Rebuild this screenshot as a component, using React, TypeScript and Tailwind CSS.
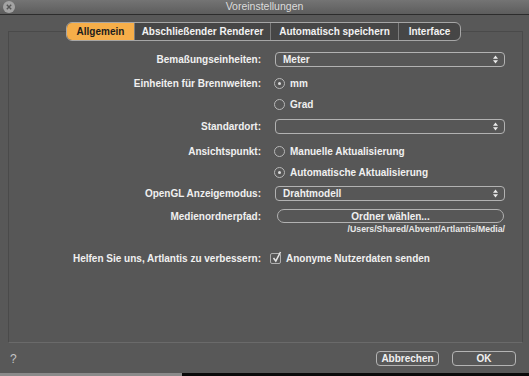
import React from 'react';

function Arrows() {
  return (
    <svg width="5" height="9" viewBox="0 0 5 9">
      <path d="M2.5 0.5 L5 3.8 L0 3.8 Z" fill="#ececec" />
      <path d="M0 5.2 L5 5.2 L2.5 8.5 Z" fill="#ececec" />
    </svg>
  );
}

function SelectBox({ value }: { value?: string }) {
  return (
    <div className="flex h-[15px] w-[230px] items-center justify-between rounded-[4px] border border-[#b2b2b2] pl-[7px] pr-[6px]">
      <span>{value}</span>
      <Arrows />
    </div>
  );
}

function Radio({ label, checked }: { label: string; checked?: boolean }) {
  return (
    <div className="-ml-[1px] flex items-center gap-[5px]">
      <span className="flex h-[11px] w-[11px] items-center justify-center rounded-full border border-[#b8b8b8]">
        {checked ? <span className="h-[3px] w-[3px] rounded-full bg-[#dddddd]" /> : null}
      </span>
      <span>{label}</span>
    </div>
  );
}

function Row({ label, className, children }: { label?: string; className: string; children: React.ReactNode }) {
  return (
    <div className={`flex items-center ${className}`}>
      <div className="w-[252px] text-right">{label}</div>
      <div className="ml-[14px] flex w-[230px] items-center">{children}</div>
    </div>
  );
}

const TABS = [
  { name: 'Allgemein', width: 'w-[67px]' },
  { name: 'Abschließender Renderer', width: 'w-[136px]' },
  { name: 'Automatisch speichern', width: 'w-[128px]' },
  { name: 'Interface', width: 'w-[62px]' },
];

export default function App() {
  return (
    <div className="flex h-[376px] w-[529px] flex-col overflow-hidden bg-[#585858] font-['Liberation_Sans',Arial,sans-serif] text-[10px] font-bold text-[#f0f0f0]">
      {/* title bar */}
      <div className="relative flex h-[15px] shrink-0 items-center justify-center border-b border-[#2c2c2c] bg-gradient-to-b from-[#747474] to-[#5d5d5d]">
        <span className="absolute left-[3px] top-[1px] flex h-[12px] w-[12px] items-center justify-center rounded-full bg-[#a3a3a3]">
          <svg width="6" height="6" viewBox="0 0 6 6">
            <path d="M0.8 0.8 L5.2 5.2 M5.2 0.8 L0.8 5.2" stroke="#555" strokeWidth="1.4" />
          </svg>
        </span>
        <span className="text-[10.5px] font-normal text-[#dcdcdc]">Voreinstellungen</span>
      </div>

      {/* tabs */}
      <div className="relative z-10 mt-[7px] flex pl-[66px]">
        <div className="flex h-[19px] overflow-hidden rounded-[6px] border border-[#a6a6a6] bg-[#464646]">
          {TABS.map((tab, i) => (
            <div
              key={tab.name}
              className={`flex items-center justify-center ${tab.width} ${
                i === 0 ? 'bg-[#f6ae49] text-[#1c1c1c]' : 'border-l border-[#7c7c7c] text-[#f2f2f2]'
              }`}
            >
              {tab.name}
            </div>
          ))}
        </div>
      </div>

      {/* group box */}
      <div className="-mt-[10px] ml-[8px] flex h-[312px] w-[515px] flex-col border border-[#4a4a4a] border-b-[#6a6a6a] bg-[#575757] pt-[20px]">
        <Row label="Bemaßungseinheiten:" className="h-[15px]">
          <SelectBox value="Meter" />
        </Row>
        <Row label="Einheiten für Brennweiten:" className="mt-[9px] h-[14px]">
          <Radio label="mm" checked />
        </Row>
        <Row className="mt-[7px] h-[14px]">
          <Radio label="Grad" />
        </Row>
        <Row label="Standardort:" className="mt-[8px] h-[15px]">
          <SelectBox />
        </Row>
        <Row label="Ansichtspunkt:" className="mt-[10px] h-[14px]">
          <Radio label="Manuelle Aktualisierung" />
        </Row>
        <Row className="mt-[7px] h-[14px]">
          <Radio label="Automatische Aktualisierung" checked />
        </Row>
        <Row label="OpenGL Anzeigemodus:" className="mt-[7px] h-[15px]">
          <SelectBox value="Drahtmodell" />
        </Row>
        <Row label="Medienordnerpfad:" className="mt-[8px] h-[14px]">
          <div className="ml-[2px] flex h-[14px] w-[227px] items-center justify-center rounded-full border border-[#b2b2b2]">
            Ordner wählen...
          </div>
        </Row>
        <Row className="mt-[2px] h-[10px]">
          <div className="w-full text-right text-[8.7px] text-[#e8e8e8]">/Users/Shared/Abvent/Artlantis/Media/</div>
        </Row>
        <Row label="Helfen Sie uns, Artlantis zu verbessern:" className="mt-[16px] h-[14px]">
          <div className="-ml-[5px] flex items-center gap-[5px]">
            <span className="relative h-[11px] w-[11px] rounded-[2px] border border-[#b0b0b0]">
              <svg className="absolute -top-[3px] left-[1px]" width="10" height="12" viewBox="0 0 10 12">
                <path d="M1.5 7 L3.8 10 L8.5 1" fill="none" stroke="#e6e6e6" strokeWidth="1.5" />
              </svg>
            </span>
            <span>Anonyme Nutzerdaten senden</span>
          </div>
        </Row>
      </div>

      {/* bottom buttons */}
      <div className="mt-[8px] flex h-[15px] items-center pr-[13px]">
        <span className="ml-[10px] text-[12px] font-normal text-[#c4c4c4]">?</span>
        <div className="ml-auto flex gap-[13px]">
          <div className="flex h-[15px] w-[63px] items-center justify-center rounded-[4px] border border-[#b4b4b4]">Abbrechen</div>
          <div className="flex h-[15px] w-[64px] items-center justify-center rounded-[4px] border border-[#b4b4b4]">OK</div>
        </div>
      </div>

      <div className="mt-auto flex h-[3px] shrink-0">
        <div className="w-[182px] bg-[#8a8a8a]" />
        <div className="flex-1 bg-[#0a0a0a]" />
      </div>
    </div>
  );
}
